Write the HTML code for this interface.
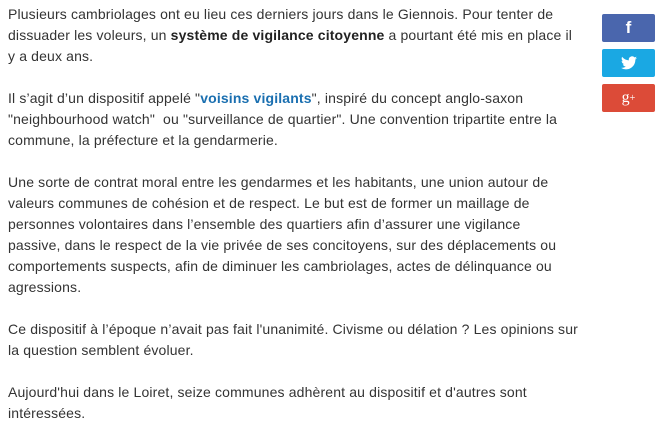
<!DOCTYPE html>
<html><head><meta charset="utf-8"><style>
body{margin:0;background:#fff;width:666px;height:433px;overflow:hidden;}
.t{position:absolute;left:8px;top:4px;width:600px;white-space:nowrap;font-family:"Liberation Sans",Arial,sans-serif;font-size:14px;line-height:21px;color:#333;letter-spacing:0.15px;}
p{margin:0 0 21px 0;}
b{color:#222}
a{color:#1a6fb0;font-weight:bold;text-decoration:none}
.s{position:absolute;left:602px;width:53px;height:28px;border-radius:2px;display:flex;align-items:center;justify-content:center;color:#fff;font-family:"Liberation Sans",sans-serif;font-weight:bold;}
</style></head><body>
<div class="t">
<p>Plusieurs cambriolages ont eu lieu ces derniers jours dans le Giennois. Pour tenter de<br>dissuader les voleurs, un <b>système de vigilance citoyenne</b> a pourtant été mis en place il<br>y a deux ans.</p>
<p>Il s’agit d’un dispositif appelé "<a>voisins vigilants</a>", inspiré du concept anglo-saxon<br>"neighbourhood watch" &nbsp;ou "surveillance de quartier". Une convention tripartite entre la<br>commune, la préfecture et la gendarmerie.</p>
<p>Une sorte de contrat moral entre les gendarmes et les habitants, une union autour de<br>valeurs communes de cohésion et de respect. Le but est de former un maillage de<br>personnes volontaires dans l’ensemble des quartiers afin d’assurer une vigilance<br>passive, dans le respect de la vie privée de ses concitoyens, sur des déplacements ou<br>comportements suspects, afin de diminuer les cambriolages, actes de délinquance ou<br>agressions.</p>
<p>Ce dispositif à l’époque n’avait pas fait l'unanimité. Civisme ou délation ? Les opinions sur<br>la question semblent évoluer.</p>
<p>Aujourd'hui dans le Loiret, seize communes adhèrent au dispositif et d'autres sont<br>intéressées.</p>
</div>
<div class="s" style="top:14px;background:#4a66ad;font-size:17px;">f</div>
<div class="s" style="top:49px;background:#1aa8e3;"><svg width="16" height="14" viewBox="0 0 24 20"><path fill="#fff" d="M24 2.4a10 10 0 0 1-2.8.8A5 5 0 0 0 23.3.4a10 10 0 0 1-3.1 1.2A4.9 4.9 0 0 0 11.8 6 14 14 0 0 1 1.7.9a4.9 4.9 0 0 0 1.5 6.6A4.9 4.9 0 0 1 1 6.9a4.9 4.9 0 0 0 3.9 4.8 5 5 0 0 1-2.2.1 4.9 4.9 0 0 0 4.6 3.4A9.9 9.9 0 0 1 0 17.3 14 14 0 0 0 7.5 19.5c9 0 14-7.5 14-14v-.6A10 10 0 0 0 24 2.4z"/></svg></div>
<div class="s" style="top:84px;background:#dc4b38;font-size:16px;font-weight:normal;font-family:'Liberation Serif',serif;">g<sup style="font-size:10px">+</sup></div>
</body></html>
